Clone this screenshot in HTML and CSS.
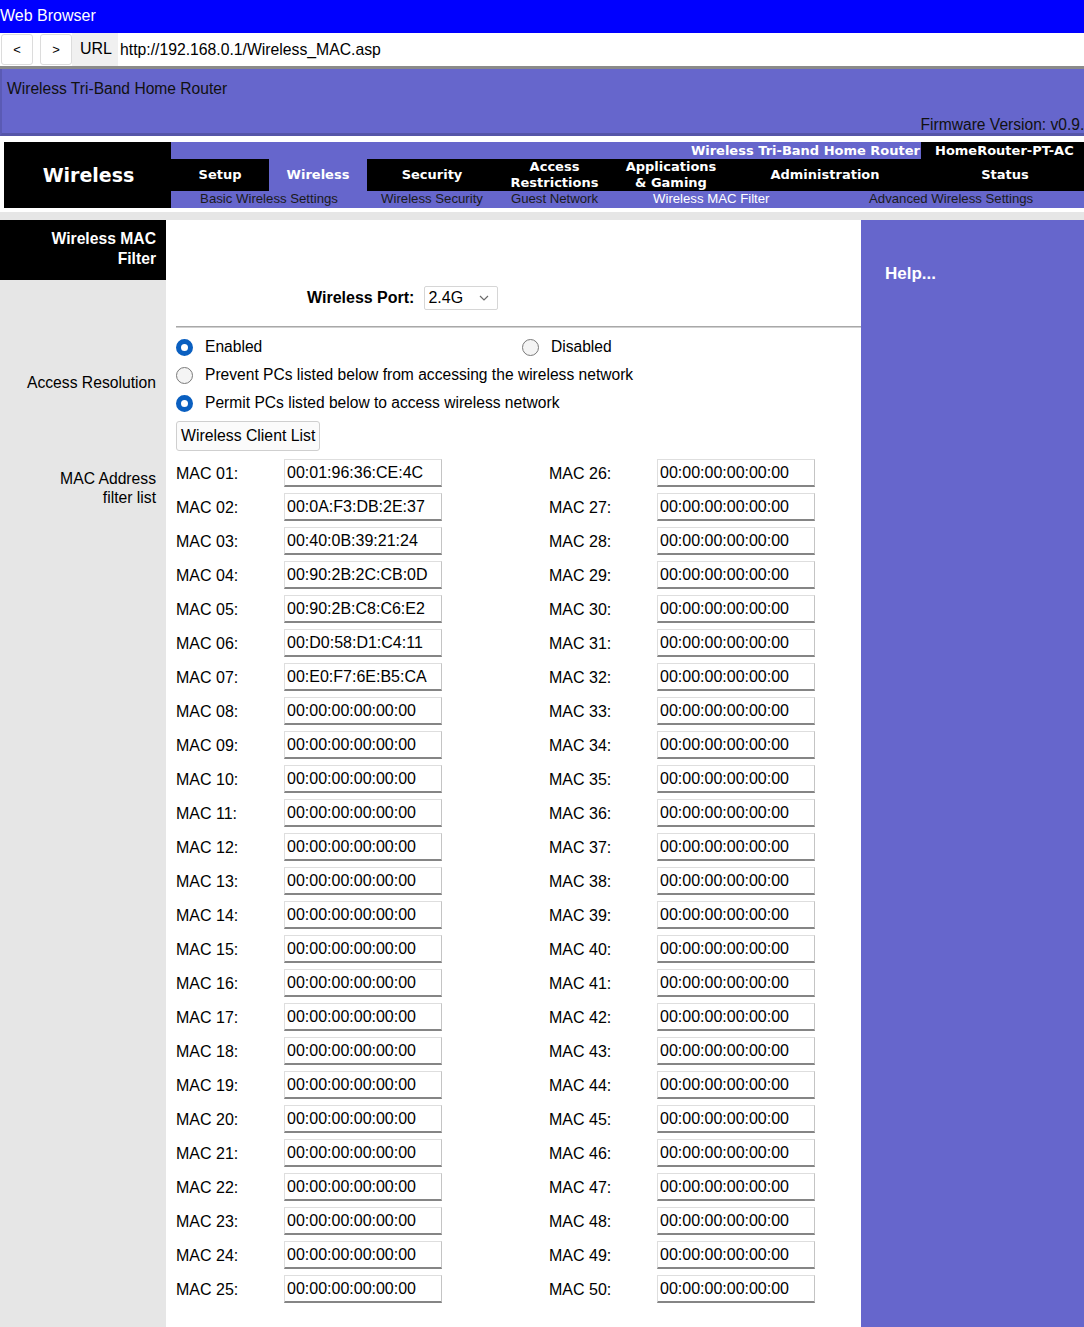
FILE: index.html
```html
<!DOCTYPE html>
<html lang="en">
<head>
<meta charset="utf-8">
<title>Wireless MAC Filter</title>
<link rel="stylesheet" href="styles.css">
</head>
<body>
<div class="titlebar">Web Browser</div>
<div class="urlbar">
  <button class="navbtn">&lt;</button>
  <button class="navbtn">&gt;</button>
  <span class="urllabel">URL</span>
  <span class="urltext">http://192.168.0.1/Wireless_MAC.asp</span>
</div>
<div class="routerhead">
  <div class="product">Wireless Tri-Band Home Router</div>
  <div class="fwrow"><span class="firmware">Firmware Version: v0.9.7</span></div>
</div>
<div class="nav">
  <div class="nav-section">Wireless</div>
  <div class="nav-main">
    <div class="nav-top">
      <span class="nav-prod">Wireless Tri-Band Home Router</span>
      <span class="nav-model">HomeRouter-PT-AC</span>
    </div>
    <div class="tabs">
      <div class="tab">Setup</div>
      <div class="tab active">Wireless</div>
      <div class="tab">Security</div>
      <div class="tab">Access<br>Restrictions</div>
      <div class="tab">Applications<br>&amp; Gaming</div>
      <div class="tab">Administration</div>
      <div class="tab tab-status">Status</div>
    </div>
    <div class="subs">
      <span class="sub sub-basic">Basic Wireless Settings</span>
      <span class="sub sub-sec">Wireless Security</span>
      <span class="sub sub-guest">Guest Network</span>
      <span class="sub sub-mac current">Wireless MAC Filter</span>
      <span class="sub sub-adv">Advanced Wireless Settings</span>
    </div>
  </div>
</div>
<div class="strip"></div>
<div class="page">
  <div class="side-title">Wireless MAC<br>Filter</div>
  <div class="main-blank"></div>
  <div class="help"><span class="help-text">Help...</span></div>

  <div class="side"></div>
  <div class="main port-sec">
    <div class="port-row">
      <span class="port-label">Wireless Port:</span>
      <div class="select"><span>2.4G</span><svg width="10" height="6" viewBox="0 0 10 6"><path d="M1 1 L5 5 L9 1" fill="none" stroke="#6b6b6b" stroke-width="1.2"/></svg></div>
    </div>
    <div class="rule"></div>
  </div>

  <div class="side side-label access-label">Access Resolution</div>
  <div class="main access-sec">
    <div class="radio-row">
      <label class="opt opt-wide"><input type="radio" name="en" checked> Enabled</label>
      <label class="opt"><input type="radio" name="en"> Disabled</label>
    </div>
    <div class="radio-row">
      <label class="opt"><input type="radio" name="mode"> Prevent PCs listed below from accessing the wireless network</label>
    </div>
    <div class="radio-row">
      <label class="opt"><input type="radio" name="mode" checked> Permit PCs listed below to access wireless network</label>
    </div>
    <button class="clientbtn">Wireless Client List</button>
  </div>

  <div class="side side-label mac-label">MAC Address<br>filter list</div>
  <div class="main mac-sec">
    <div class="maccol">
      <span class="maclbl">MAC 01:</span><input class="macin" value="00:01:96:36:CE:4C">
      <span class="maclbl">MAC 02:</span><input class="macin" value="00:0A:F3:DB:2E:37">
      <span class="maclbl">MAC 03:</span><input class="macin" value="00:40:0B:39:21:24">
      <span class="maclbl">MAC 04:</span><input class="macin" value="00:90:2B:2C:CB:0D">
      <span class="maclbl">MAC 05:</span><input class="macin" value="00:90:2B:C8:C6:E2">
      <span class="maclbl">MAC 06:</span><input class="macin" value="00:D0:58:D1:C4:11">
      <span class="maclbl">MAC 07:</span><input class="macin" value="00:E0:F7:6E:B5:CA">
      <span class="maclbl">MAC 08:</span><input class="macin" value="00:00:00:00:00:00">
      <span class="maclbl">MAC 09:</span><input class="macin" value="00:00:00:00:00:00">
      <span class="maclbl">MAC 10:</span><input class="macin" value="00:00:00:00:00:00">
      <span class="maclbl">MAC 11:</span><input class="macin" value="00:00:00:00:00:00">
      <span class="maclbl">MAC 12:</span><input class="macin" value="00:00:00:00:00:00">
      <span class="maclbl">MAC 13:</span><input class="macin" value="00:00:00:00:00:00">
      <span class="maclbl">MAC 14:</span><input class="macin" value="00:00:00:00:00:00">
      <span class="maclbl">MAC 15:</span><input class="macin" value="00:00:00:00:00:00">
      <span class="maclbl">MAC 16:</span><input class="macin" value="00:00:00:00:00:00">
      <span class="maclbl">MAC 17:</span><input class="macin" value="00:00:00:00:00:00">
      <span class="maclbl">MAC 18:</span><input class="macin" value="00:00:00:00:00:00">
      <span class="maclbl">MAC 19:</span><input class="macin" value="00:00:00:00:00:00">
      <span class="maclbl">MAC 20:</span><input class="macin" value="00:00:00:00:00:00">
      <span class="maclbl">MAC 21:</span><input class="macin" value="00:00:00:00:00:00">
      <span class="maclbl">MAC 22:</span><input class="macin" value="00:00:00:00:00:00">
      <span class="maclbl">MAC 23:</span><input class="macin" value="00:00:00:00:00:00">
      <span class="maclbl">MAC 24:</span><input class="macin" value="00:00:00:00:00:00">
      <span class="maclbl">MAC 25:</span><input class="macin" value="00:00:00:00:00:00">
    </div>
    <div class="maccol maccol-2">
      <span class="maclbl">MAC 26:</span><input class="macin" value="00:00:00:00:00:00">
      <span class="maclbl">MAC 27:</span><input class="macin" value="00:00:00:00:00:00">
      <span class="maclbl">MAC 28:</span><input class="macin" value="00:00:00:00:00:00">
      <span class="maclbl">MAC 29:</span><input class="macin" value="00:00:00:00:00:00">
      <span class="maclbl">MAC 30:</span><input class="macin" value="00:00:00:00:00:00">
      <span class="maclbl">MAC 31:</span><input class="macin" value="00:00:00:00:00:00">
      <span class="maclbl">MAC 32:</span><input class="macin" value="00:00:00:00:00:00">
      <span class="maclbl">MAC 33:</span><input class="macin" value="00:00:00:00:00:00">
      <span class="maclbl">MAC 34:</span><input class="macin" value="00:00:00:00:00:00">
      <span class="maclbl">MAC 35:</span><input class="macin" value="00:00:00:00:00:00">
      <span class="maclbl">MAC 36:</span><input class="macin" value="00:00:00:00:00:00">
      <span class="maclbl">MAC 37:</span><input class="macin" value="00:00:00:00:00:00">
      <span class="maclbl">MAC 38:</span><input class="macin" value="00:00:00:00:00:00">
      <span class="maclbl">MAC 39:</span><input class="macin" value="00:00:00:00:00:00">
      <span class="maclbl">MAC 40:</span><input class="macin" value="00:00:00:00:00:00">
      <span class="maclbl">MAC 41:</span><input class="macin" value="00:00:00:00:00:00">
      <span class="maclbl">MAC 42:</span><input class="macin" value="00:00:00:00:00:00">
      <span class="maclbl">MAC 43:</span><input class="macin" value="00:00:00:00:00:00">
      <span class="maclbl">MAC 44:</span><input class="macin" value="00:00:00:00:00:00">
      <span class="maclbl">MAC 45:</span><input class="macin" value="00:00:00:00:00:00">
      <span class="maclbl">MAC 46:</span><input class="macin" value="00:00:00:00:00:00">
      <span class="maclbl">MAC 47:</span><input class="macin" value="00:00:00:00:00:00">
      <span class="maclbl">MAC 48:</span><input class="macin" value="00:00:00:00:00:00">
      <span class="maclbl">MAC 49:</span><input class="macin" value="00:00:00:00:00:00">
      <span class="maclbl">MAC 50:</span><input class="macin" value="00:00:00:00:00:00">
    </div>
  </div>
</div>
</body>
</html>
```
FILE: styles.css
```css
* { box-sizing: border-box; }
html, body {
  margin: 0;
  padding: 0;
  width: 1084px;
  overflow: hidden;
}
body {
  font-family: "Liberation Sans", Arial, sans-serif;
  font-size: 15.6px;
  color: #000;
  background: #fff;
}

/* browser chrome */
.titlebar {
  height: 33px;
  background: #0000ff;
  color: #fff;
  line-height: 31px;
  font-size: 16px;
}
.urlbar {
  height: 36px;
  display: flex;
  align-items: center;
  border-bottom: 3px solid #8a8a8a;
  background: #fff;
}
.navbtn {
  width: 32px;
  height: 31px;
  margin-left: 1px;
  margin-right: 7px;
  border: 1px solid #dcdcdc;
  border-radius: 3px;
  background: #fff;
  font-family: "Liberation Sans", Arial, sans-serif;
  font-size: 13px;
  color: #000;
  padding: 0;
}
.navbtn + .navbtn { margin-left: 0; margin-right: 0; }
.urllabel {
  align-self: stretch;
  width: 46px;
  background: #f0f0f0;
  padding-left: 8px;
  line-height: 31px;
  font-size: 16px;
}
.urltext {
  padding-left: 2px;
  font-size: 15.75px;
  line-height: 31px;
}

/* router header */
.routerhead {
  height: 67px;
  background: #6666cc;
  border-left: 2px solid #5a5ab4;
  border-bottom: 3px solid #5555a8;
  color: #111;
  display: flex;
  flex-direction: column;
}
.product {
  padding-left: 5px;
  padding-top: 10px;
  line-height: 19px;
}
.fwrow {
  display: flex;
  justify-content: flex-end;
  margin-top: 17px;
  margin-right: -9px;
  line-height: 19px;
  white-space: nowrap;
}

/* navigation */
.nav {
  display: flex;
  margin-top: 6px;
  margin-left: 4px;
  height: 66px;
  font-family: "DejaVu Sans", Verdana, sans-serif;
  font-weight: bold;
  color: #fff;
}
.nav-section {
  width: 167px;
  background: #000;
  font-size: 19px;
  display: flex;
  align-items: center;
  justify-content: center;
  padding-left: 2px;
}
.nav-main {
  flex: 1;
  display: flex;
  flex-direction: column;
}
.nav-top {
  height: 17px;
  display: flex;
  font-size: 13px;
  line-height: 17px;
  white-space: nowrap;
}
.nav-prod {
  flex: 1;
  background: #6666cc;
  text-align: right;
  padding-right: 1px;
}
.nav-model {
  width: 163px;
  background: #000;
  padding-left: 14px;
}
.tabs {
  height: 32px;
  background: #000;
  display: grid;
  grid-template-columns: 98px 98px 130px 115px 118px 190px 164px;
  font-size: 13px;
  line-height: 16px;
}
.tab {
  display: flex;
  align-items: center;
  justify-content: center;
  text-align: center;
}
.tab-status { padding-left: 6px; }
.tab.active { background: #6666cc; }
.subs {
  height: 17px;
  background: #6666cc;
  display: grid;
  grid-template-columns: 98px 98px 130px 115px 118px 190px 164px;
  grid-template-rows: 17px;
  font-family: "Liberation Sans", Arial, sans-serif;
  font-weight: normal;
  font-size: 13.2px;
  line-height: 15px;
  color: #1a1a1a;
  white-space: nowrap;
}
.sub { grid-row: 1; }
.sub-basic { grid-column: 1 / 3; justify-self: center; }
.sub-sec { grid-column: 3; justify-self: center; }
.sub-guest { grid-column: 4; justify-self: center; }
.sub-mac { grid-column: 5 / 7; justify-self: start; margin-left: 41px; }
.sub-adv { grid-column: 6 / 8; justify-self: start; margin-left: 139px; }
.sub.current { color: #fff; }

.strip {
  margin-top: 4px;
  height: 8px;
  background: #e6e6e6;
}

/* page body */
.page {
  display: grid;
  grid-template-columns: 166px 695px 223px;
  grid-template-rows: 60px auto auto auto;
}
.side-title {
  background: #000;
  color: #fff;
  font-weight: bold;
  font-size: 15.7px;
  text-align: right;
  padding: 9px 10px 0 0;
  line-height: 20px;
}
.help {
  grid-column: 3;
  grid-row: 1 / 5;
  background: #6666cc;
  padding: 44px 0 0 24px;
}
.help-text {
  color: #fff;
  font-weight: bold;
  font-size: 17px;
  line-height: 20px;
}
.side {
  grid-column: 1;
  background: #e6e6e6;
}
.side-label {
  text-align: right;
  padding-right: 10px;
  line-height: 19px;
  font-size: 15.7px;
}
.access-label { padding-top: 45px; }
.mac-label { padding-top: 18px; }
.main { grid-column: 2; }

.port-sec { padding-top: 6px; }
.port-row {
  display: flex;
  align-items: center;
  height: 24px;
  padding-left: 141px;
  gap: 10px;
  font-size: 16px;
}
.port-label { font-weight: bold; }
.select {
  width: 74px;
  height: 24px;
  border: 1px solid #d6d6d6;
  border-radius: 2px;
  display: flex;
  align-items: center;
  justify-content: space-between;
  padding: 0 8px 0 3px;
  background: #fff;
}
.rule {
  margin-top: 16px;
  margin-left: 10px;
  height: 2px;
  background: #a8a8a8;
  border-bottom: 1px solid #d0d0d0;
}

.access-sec { padding-left: 10px; padding-top: 5px; }
.radio-row {
  height: 28px;
  display: flex;
  align-items: center;
}
.opt {
  display: flex;
  align-items: center;
  gap: 12px;
}
.opt-wide { width: 346px; }
.opt input {
  -webkit-appearance: none;
  appearance: none;
  margin: 0;
  width: 17px;
  height: 17px;
  border-radius: 50%;
  border: 1px solid #7a7a7a;
  background: #f4f4f4;
}
.opt input:checked {
  border: 5px solid #0a5fc0;
  background: #fff;
}
.clientbtn {
  margin-top: 4px;
  height: 30px;
  padding: 0 4px;
  border: 1px solid #cfcfcf;
  border-radius: 3px;
  background: #fbfbfb;
  font-family: "Liberation Sans", Arial, sans-serif;
  font-size: 15.8px;
  color: #000;
  white-space: nowrap;
}

.mac-sec {
  display: flex;
  padding: 8px 0 40px 10px;
}
.maccol {
  display: grid;
  grid-template-columns: 108px 158px;
  row-gap: 6px;
  align-items: center;
}
.maccol-2 { margin-left: 107px; }
.maclbl { line-height: 19px; font-size: 16px; }
.macin {
  width: 158px;
  height: 28px;
  margin: 0;
  padding: 0 2px;
  border: 1px solid #dedede;
  border-right-color: #c4c4c4;
  border-bottom: 2px solid #858585;
  font-family: "Liberation Sans", Arial, sans-serif;
  font-size: 16px;
  color: #000;
  background: #fff;
}
```
